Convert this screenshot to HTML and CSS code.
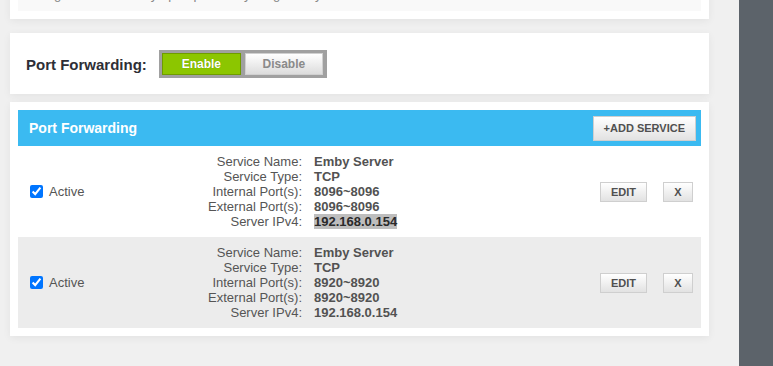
FILE: index.html
```html
<!DOCTYPE html>
<html lang="en">
<head>
  <meta charset="UTF-8">
  <meta name="viewport" content="width=device-width, initial-scale=1.0">
  <title>Port Forwarding</title>
  <link rel="stylesheet" href="styles.css">
</head>
<body>
  <div class="layout">
    <div class="main">
      <!-- notice card, scrolled mostly out of view -->
      <div class="card notice-card">
        <div class="notice">Using this feature may open ports on your gateway to the Internet.</div>
      </div>

      <div class="card toggle-card">
        <span class="toggle-label">Port Forwarding:</span>
        <div class="toggle">
          <button class="toggle-btn on">Enable</button>
          <button class="toggle-btn off">Disable</button>
        </div>
      </div>

      <div class="card table-card">
        <div class="table-head">
          <h3>Port Forwarding</h3>
          <button class="btn">+ADD SERVICE</button>
        </div>

        <div class="rule">
          <label class="active"><input type="checkbox" checked> Active</label>
          <div class="details">
            <span class="key">Service Name:</span><span class="val">Emby Server</span>
            <span class="key">Service Type:</span><span class="val">TCP</span>
            <span class="key">Internal Port(s):</span><span class="val">8096~8096</span>
            <span class="key">External Port(s):</span><span class="val">8096~8096</span>
            <span class="key">Server IPv4:</span><span class="val"><span class="picked">192.168.0.154</span></span>
          </div>
          <div class="actions">
            <button class="btn edit">EDIT</button>
            <button class="btn del">X</button>
          </div>
        </div>

        <div class="rule alt">
          <label class="active"><input type="checkbox" checked> Active</label>
          <div class="details">
            <span class="key">Service Name:</span><span class="val">Emby Server</span>
            <span class="key">Service Type:</span><span class="val">TCP</span>
            <span class="key">Internal Port(s):</span><span class="val">8920~8920</span>
            <span class="key">External Port(s):</span><span class="val">8920~8920</span>
            <span class="key">Server IPv4:</span><span class="val">192.168.0.154</span>
          </div>
          <div class="actions">
            <button class="btn edit">EDIT</button>
            <button class="btn del">X</button>
          </div>
        </div>
      </div>
    </div>
    <div class="sidebar"></div>
  </div>
</body>
</html>
```
FILE: styles.css
```css
html, body {
  height: 100%;
}
body {
  margin: 0;
  font-family: "Liberation Sans", Arial, sans-serif;
  background-color: #f0f0f0;
  color: #555;
  overflow: hidden;
}
.layout {
  display: flex;
  height: 100%;
}
.main {
  width: 699px;
  padding-left: 10px;
  padding-right: 30px;
}
.sidebar {
  flex: 1;
  background: #5c636a;
}
.card {
  background: white;
  box-shadow: 0px 2px 8px rgba(0, 0, 0, 0.06);
}
.notice-card {
  margin-top: -27px;
  padding: 8px;
}
.notice {
  background: #f9f9f9;
  height: 15px;
  padding: 6px 10px 9px;
  font-size: 13px;
  line-height: 15px;
  color: #888;
}
.toggle-card {
  margin-top: 14px;
  padding: 17px 16px 16px;
  display: flex;
  align-items: center;
  gap: 12px;
}
.toggle-label {
  font-size: 15px;
  font-weight: bold;
  color: #2e2e36;
}
.toggle {
  display: flex;
  gap: 4px;
  background: #a0a0a0;
  padding: 3px 4px 3px 3px;
}
.toggle-btn {
  width: 79px;
  height: 22px;
  font-family: inherit;
  font-size: 12px;
  font-weight: bold;
  padding: 0;
  cursor: pointer;
}
.toggle-btn.on {
  background: #8cc600;
  border: 1px solid #6f9c00;
  color: white;
  text-shadow: 0 0 1px rgba(0, 0, 0, 0.3);
}
.toggle-btn.off {
  width: 78px;
  background: linear-gradient(#ffffff, #dcdcdc);
  border: 1px solid #d0d0d0;
  color: #8a8a8a;
}
.table-card {
  margin-top: 8px;
  padding: 8px;
}
.table-head {
  background: #3bbaf1;
  height: 36px;
  padding: 0 5px 0 11px;
  display: flex;
  align-items: center;
  justify-content: space-between;
}
.table-head h3 {
  margin: 0;
  font-size: 14px;
  color: white;
}
.btn {
  font-family: inherit;
  font-size: 11px;
  font-weight: bold;
  color: #505050;
  background: linear-gradient(#ffffff, #e2e2e2);
  border: 1px solid #cfcfcf;
  padding: 0 10px;
  height: 25px;
  cursor: pointer;
}
.rule {
  display: flex;
  align-items: center;
  padding: 8px 8px 8px 12px;
  font-size: 13px;
}
.rule.alt {
  background: #ececec;
}
.active {
  width: 172px;
  display: flex;
  align-items: center;
  gap: 6px;
}
.active input {
  margin: 0;
  width: 13px;
  height: 13px;
  accent-color: #0075ff;
}
.details {
  display: grid;
  grid-template-columns: 100px auto;
  column-gap: 12px;
  line-height: 15px;
}
.key {
  text-align: right;
}
.val {
  font-weight: bold;
  color: #525252;
}
.picked {
  background: #bebebe;
  color: #2a2a2a;
}
.actions {
  margin-left: auto;
  display: flex;
  gap: 16px;
}
.edit {
  width: 47px;
  height: 20px;
  padding: 0;
}
.del {
  width: 30px;
  height: 20px;
  padding: 0;
}
```
